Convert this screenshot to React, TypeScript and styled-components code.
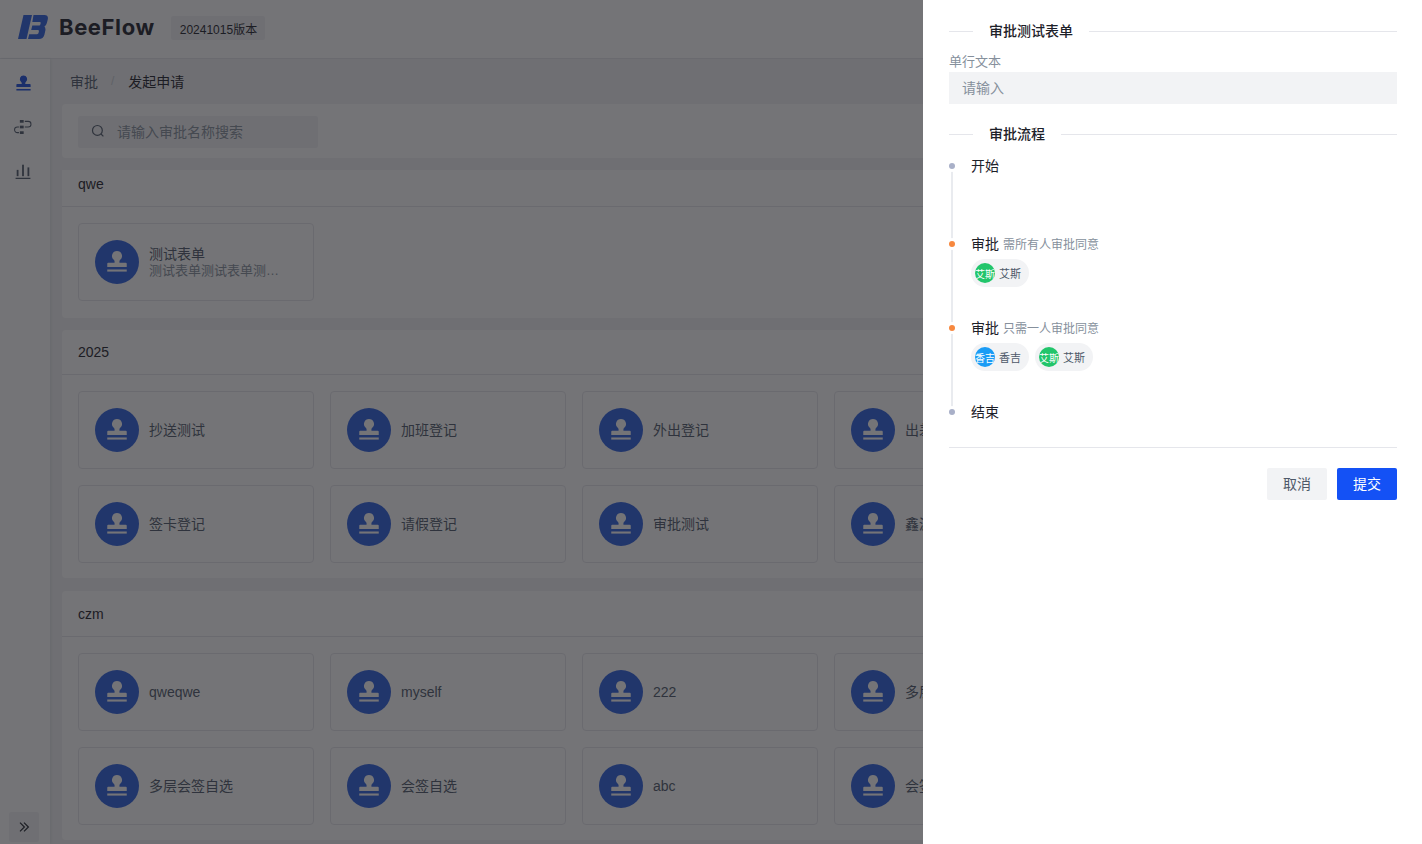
import styled, { createGlobalStyle } from "styled-components";

const GlobalStyle = createGlobalStyle`
  html, body {
    margin: 0;
    padding: 0;
    height: 100%;
    overflow: hidden;
  }
  body {
    background: #f2f3f5;
    font-family: "Liberation Sans", "Noto Sans CJK SC", sans-serif;
    font-size: 14px;
    color: #1d2129;
  }
  * {
    box-sizing: border-box;
  }
`;

type Entry = { name: string; desc?: string };
type Group = { title: string; offset: number; extra: number; titleHeight: number; items: Entry[] };

const groups: Group[] = [
  {
    title: "qwe",
    offset: -8,
    extra: 2,
    titleHeight: 45,
    items: [{ name: "测试表单", desc: "测试表单测试表单测试表单测试表单" }],
  },
  {
    title: "2025",
    offset: 0,
    extra: 0,
    titleHeight: 45,
    items: [
      { name: "抄送测试" },
      { name: "加班登记" },
      { name: "外出登记" },
      { name: "出差登记" },
      { name: "签卡登记" },
      { name: "请假登记" },
      { name: "审批测试" },
      { name: "鑫源审批" },
    ],
  },
  {
    title: "czm",
    offset: 1,
    extra: 0,
    titleHeight: 46,
    items: [
      { name: "qweqwe" },
      { name: "myself" },
      { name: "222" },
      { name: "多层或签" },
      { name: "多层会签自选" },
      { name: "会签自选" },
      { name: "abc" },
      { name: "会签测试" },
    ],
  },
];

function StampIcon({ size = 19 }: { size?: number }) {
  return (
    <svg width={size} height={size} viewBox="0 0 16 16" fill="currentColor">
      <path d="M8 1.2a3.1 3.1 0 0 0-2 5.45c.35.3.5.6.5.95v.9H2.6a.6.6 0 0 0-.6.6v1.9h12V9.1a.6.6 0 0 0-.6-.6H9.5v-.9c0-.35.15-.65.5-.95A3.1 3.1 0 0 0 8 1.2z" />
      <rect x="2" y="12.6" width="12" height="1.3" />
    </svg>
  );
}

function FlowIcon() {
  return (
    <svg width="18" height="18" viewBox="0 0 16 16" fill="none" stroke="currentColor" strokeWidth="0.9">
      <rect x="5.2" y="1.8" width="3.4" height="2.4" fill="currentColor" stroke="none" />
      <rect x="5.2" y="6.8" width="3.4" height="2.4" fill="currentColor" stroke="none" />
      <rect x="5.2" y="11.8" width="3.4" height="2.4" fill="currentColor" stroke="none" />
      <path d="M9.6 3h3a2.5 2.5 0 0 1 0 5H9.6" />
      <path d="M4.4 8H3a2.5 2.5 0 0 0 0 5h1.4" />
    </svg>
  );
}

function ChartIcon() {
  return (
    <svg width="18" height="18" viewBox="0 0 16 16" fill="currentColor">
      <rect x="2.4" y="7" width="1.6" height="5.6" />
      <rect x="7.2" y="2.4" width="1.6" height="10.2" />
      <rect x="12" y="4.8" width="1.6" height="7.8" />
      <rect x="1.4" y="14" width="13.2" height="1.1" />
    </svg>
  );
}

function SearchIcon() {
  return (
    <svg width="14" height="14" viewBox="0 0 14 14" fill="none" stroke="currentColor" strokeWidth="1.2">
      <circle cx="6.4" cy="6.4" r="4.9" />
      <path d="M10 10l2.4 2.4" />
    </svg>
  );
}

function ExpandIcon() {
  return (
    <svg width="12" height="12" viewBox="0 0 12 12" fill="none" stroke="currentColor" strokeWidth="1.2">
      <path d="M2 1.6 6.4 6 2 10.4" />
      <path d="M6 1.6 10.4 6 6 10.4" />
    </svg>
  );
}

function LogoMark() {
  return (
    <svg width="30" height="24" viewBox="0 0 30 24" fill="#2b5fe0">
      <path d="M5.5 0H14L8.5 24H0z" />
      <path d="M15.5 0h11c2.6 0 3.9 1.6 3.3 4.2l-.8 3.4c-.3 1.4-1.2 3-2.6 4 1 .9 1.3 2.6.9 4.2l-.9 4C25.800 22.600 23.700 24 21 24H10l1.200-4.800H19c.8 0 1.300-.5 1.500-1.200l.4-1.700c.2-.8-.2-1.200-1-1.200h-6.700l1.100-4.600h6.600c.8 0 1.300-.4 1.500-1.200l.3-1.200c.2-.8-.2-1.200-1-1.200h-7.400z" />
    </svg>
  );
}

export default function App() {
  return (
    <>
      <GlobalStyle />
      <Page>
        <Header>
          <LogoMark />
          <Wordmark>BeeFlow</Wordmark>
          <VersionTag>20241015版本</VersionTag>
        </Header>
        <Body>
          <Sidebar>
            <NavList>
              <NavItem $active>
                <StampIcon />
              </NavItem>
              <NavItem>
                <FlowIcon />
              </NavItem>
              <NavItem>
                <ChartIcon />
              </NavItem>
            </NavList>
            <CollapseButton>
              <ExpandIcon />
            </CollapseButton>
          </Sidebar>
          <Main>
            <Breadcrumb>
              <Crumb>审批</Crumb>
              <CrumbSlash>/</CrumbSlash>
              <Crumb $current>发起申请</Crumb>
            </Breadcrumb>
            <SearchCard>
              <SearchBox>
                <SearchIcon />
                <SearchHint>请输入审批名称搜索</SearchHint>
              </SearchBox>
            </SearchCard>
            <Scroller>
              {groups.map((group) => (
                <Section key={group.title} $offset={group.offset} $extra={group.extra}>
                  <SectionTitle $height={group.titleHeight}>{group.title}</SectionTitle>
                  <CardGrid>
                    {group.items.map((item) => (
                      <FormCard key={item.name}>
                        <CardBadge>
                          <StampIcon size={26} />
                        </CardBadge>
                        <CardText>
                          <CardName>{item.name}</CardName>
                          {item.desc && <CardDesc>{item.desc}</CardDesc>}
                        </CardText>
                      </FormCard>
                    ))}
                  </CardGrid>
                </Section>
              ))}
            </Scroller>
          </Main>
        </Body>
      </Page>
      <Mask />
      <Drawer>
        <Divider>
          <DividerText>审批测试表单</DividerText>
        </Divider>
        <FieldLabel>单行文本</FieldLabel>
        <TextInput placeholder="请输入" />
        <Divider $second>
          <DividerText>审批流程</DividerText>
        </Divider>
        <Timeline>
          <Step $height={78}>
            <Dot />
            <StepTitle>开始</StepTitle>
          </Step>
          <Step $height={84}>
            <Dot $warn />
            <StepTitle>
              审批<StepNote>需所有人审批同意</StepNote>
            </StepTitle>
            <Chips>
              <Chip>
                <Avatar $color="#22c56b">艾斯</Avatar>
                艾斯
              </Chip>
            </Chips>
          </Step>
          <Step $height={84}>
            <Dot $warn />
            <StepTitle>
              审批<StepNote>只需一人审批同意</StepNote>
            </StepTitle>
            <Chips>
              <Chip>
                <Avatar $color="#1a9cf5">香吉</Avatar>
                香吉
              </Chip>
              <Chip>
                <Avatar $color="#22c56b">艾斯</Avatar>
                艾斯
              </Chip>
            </Chips>
          </Step>
          <Step $height={24} $last>
            <Dot />
            <StepTitle>结束</StepTitle>
          </Step>
        </Timeline>
        <Footer>
          <CancelButton>取消</CancelButton>
          <SubmitButton>提交</SubmitButton>
        </Footer>
      </Drawer>
    </>
  );
}

const Page = styled.div`
  width: 100%;
  height: 100vh;
  display: flex;
  flex-direction: column;
  overflow: hidden;
`;

const Header = styled.header`
  height: 59px;
  flex: none;
  display: flex;
  align-items: center;
  padding: 0 0 4px 18px;
  background: #fff;
  border-bottom: 1px solid #e5e6eb;
`;

const Wordmark = styled.span`
  margin-left: 11px;
  font-family: Inter, sans-serif;
  font-weight: 700;
  font-size: 22px;
  letter-spacing: 0.6px;
  color: #1d2129;
`;

const VersionTag = styled.span`
  margin: 2px 0 0 16px;
  height: 24px;
  padding: 0 8px 0 9px;
  display: flex;
  align-items: center;
  font-size: 12px;
  background: #f2f3f5;
  border-radius: 2px;
`;

const Body = styled.div`
  flex: 1;
  min-height: 0;
  display: flex;
`;

const Sidebar = styled.aside`
  width: 50px;
  flex: none;
  display: flex;
  flex-direction: column;
  justify-content: space-between;
  align-items: center;
  padding: 2px 0 2px;
  background: #fff;
  box-shadow: 1px 0 3px rgba(0, 0, 0, 0.08);
`;

const NavList = styled.nav`
  display: flex;
  flex-direction: column;
  align-items: center;
  margin-left: -4px;
`;

const NavItem = styled.div<{ $active?: boolean }>`
  width: 30px;
  height: 44px;
  display: flex;
  align-items: center;
  justify-content: center;
  color: ${(p) => (p.$active ? "#1a4fe0" : "#4e5969")};
`;

const CollapseButton = styled.div`
  width: 30px;
  height: 30px;
  margin-left: -2px;
  display: flex;
  align-items: center;
  justify-content: center;
  background: #f2f3f5;
  border-radius: 2px;
  color: #1d2129;
`;

const Main = styled.main`
  flex: 1;
  min-width: 0;
  padding: 0 12px;
  display: flex;
  flex-direction: column;
`;

const Breadcrumb = styled.div`
  height: 45px;
  flex: none;
  display: flex;
  align-items: center;
  padding: 0 0 2px 8px;
`;

const Crumb = styled.span<{ $current?: boolean }>`
  color: ${(p) => (p.$current ? "#1d2129" : "#4e5969")};
`;

const CrumbSlash = styled.span`
  margin: 0 14px 0 13px;
  color: #c9cdd4;
  font-size: 12px;
`;

const SearchCard = styled.div`
  height: 54px;
  flex: none;
  padding: 12px 16px;
  background: #fff;
  border-radius: 4px;
`;

const SearchBox = styled.div`
  width: 240px;
  height: 32px;
  display: flex;
  align-items: center;
  padding: 0 0 2px 13px;
  gap: 12px;
  background: #f2f3f5;
  border-radius: 2px;
  color: #4e5969;
`;

const SearchHint = styled.span`
  color: #86909c;
`;

const Scroller = styled.div`
  flex: 1;
  min-height: 0;
  margin-top: 12px;
  overflow: hidden;
  display: flex;
  flex-direction: column;
  gap: 12px;
`;

const Section = styled.section<{ $offset: number; $extra: number }>`
  flex: none;
  background: #fff;
  border-radius: 4px;
  margin-top: ${(p) => p.$offset}px;
  padding-bottom: ${(p) => p.$extra}px;
`;

const SectionTitle = styled.div<{ $height: number }>`
  height: ${(p) => p.$height}px;
  padding-left: 16px;
  display: flex;
  align-items: center;
  border-bottom: 1px solid #e5e6eb;
`;

const CardGrid = styled.div`
  display: grid;
  grid-template-columns: repeat(4, 236px);
  gap: 16px;
  padding: 16px 16px 15px;
`;

const FormCard = styled.div`
  height: 78px;
  display: flex;
  align-items: center;
  gap: 10px;
  padding-left: 16px;
  border: 1px solid #e5e6eb;
  border-radius: 4px;
`;

const CardBadge = styled.div`
  width: 44px;
  height: 44px;
  flex: none;
  display: flex;
  align-items: center;
  justify-content: center;
  border-radius: 50%;
  background: #2b5fe0;
  color: #fff;
`;

const CardText = styled.div`
  min-width: 0;
  flex: 1;
  padding-right: 30px;
`;

const CardName = styled.div`
  line-height: 16px;
  color: #4e5969;
`;

const CardDesc = styled.div`
  font-size: 13px;
  line-height: 16px;
  padding-top: 1px;
  margin-bottom: -1px;
  color: #86909c;
  overflow: hidden;
  white-space: nowrap;
  text-overflow: ellipsis;
`;

const Mask = styled.div`
  position: fixed;
  inset: 0;
  background: rgba(27, 28, 32, 0.61);
`;

const Drawer = styled.aside`
  position: fixed;
  top: 0;
  right: 0;
  bottom: 0;
  width: 499px;
  padding: 0 25px 0 26px;
  background: #fff;
`;

const Divider = styled.div<{ $second?: boolean }>`
  display: flex;
  align-items: center;
  height: 22px;
  margin-top: ${(p) => (p.$second ? "19px" : "20px")};
  &::before {
    content: "";
    width: 24px;
    height: 1px;
    background: #e5e6eb;
  }
  &::after {
    content: "";
    flex: 1;
    height: 1px;
    background: #e5e6eb;
  }
`;

const DividerText = styled.span`
  padding: 0 16px 2px;
  font-weight: 500;
`;

const FieldLabel = styled.div`
  margin-top: 9px;
  font-size: 13px;
  line-height: 21px;
  height: 21px;
  color: #86909c;
`;

const TextInput = styled.input`
  display: block;
  width: 100%;
  height: 32px;
  padding: 0 13px;
  border: 0;
  outline: 0;
  border-radius: 0;
  background: #f2f3f5;
  font: inherit;
  &::placeholder {
    color: #86909c;
    opacity: 1;
  }
`;

const Timeline = styled.div`
  margin-top: 10px;
`;

const Step = styled.div<{ $height: number; $last?: boolean }>`
  position: relative;
  height: ${(p) => p.$height}px;
  padding-left: 22px;
  &::before {
    content: "";
    display: ${(p) => (p.$last ? "none" : "block")};
    position: absolute;
    left: 2px;
    top: 10px;
    bottom: -10px;
    width: 2px;
    background: #e9ebef;
  }
`;

const Dot = styled.span<{ $warn?: boolean }>`
  position: absolute;
  z-index: 1;
  left: 0;
  top: 8px;
  width: 6px;
  height: 6px;
  border-radius: 50%;
  background: ${(p) => (p.$warn ? "#f7883f" : "#a9b0c8")};
  box-shadow: 0 0 0 3px #fff;
`;

const StepTitle = styled.div`
  height: 22px;
  line-height: 22px;
  color: #1d2129;
`;

const StepNote = styled.span`
  margin-left: 4px;
  font-size: 12px;
  color: #86909c;
`;

const Chips = styled.div`
  display: flex;
  gap: 6px;
  margin-top: 4px;
`;

const Chip = styled.div`
  height: 28px;
  display: flex;
  align-items: center;
  gap: 4px;
  padding: 0 8px 0 4px;
  border-radius: 14px;
  background: #f2f3f5;
  font-size: 11px;
  color: #4e5969;
`;

const Avatar = styled.span<{ $color: string }>`
  width: 20px;
  height: 20px;
  border-radius: 50%;
  display: flex;
  align-items: center;
  justify-content: center;
  overflow: hidden;
  white-space: nowrap;
  font-size: 10px;
  color: #fff;
  background: ${(p) => p.$color};
`;

const Footer = styled.div`
  margin-top: 22px;
  padding-top: 20px;
  border-top: 1px solid #e5e6eb;
  display: flex;
  justify-content: flex-end;
  gap: 10px;
`;

const CancelButton = styled.button`
  width: 60px;
  height: 32px;
  padding: 0 0 2px;
  border: 0;
  border-radius: 2px;
  background: #f2f3f5;
  color: #4e5969;
  font: inherit;
`;

const SubmitButton = styled(CancelButton)`
  background: #1451f5;
  color: #fff;
`;
